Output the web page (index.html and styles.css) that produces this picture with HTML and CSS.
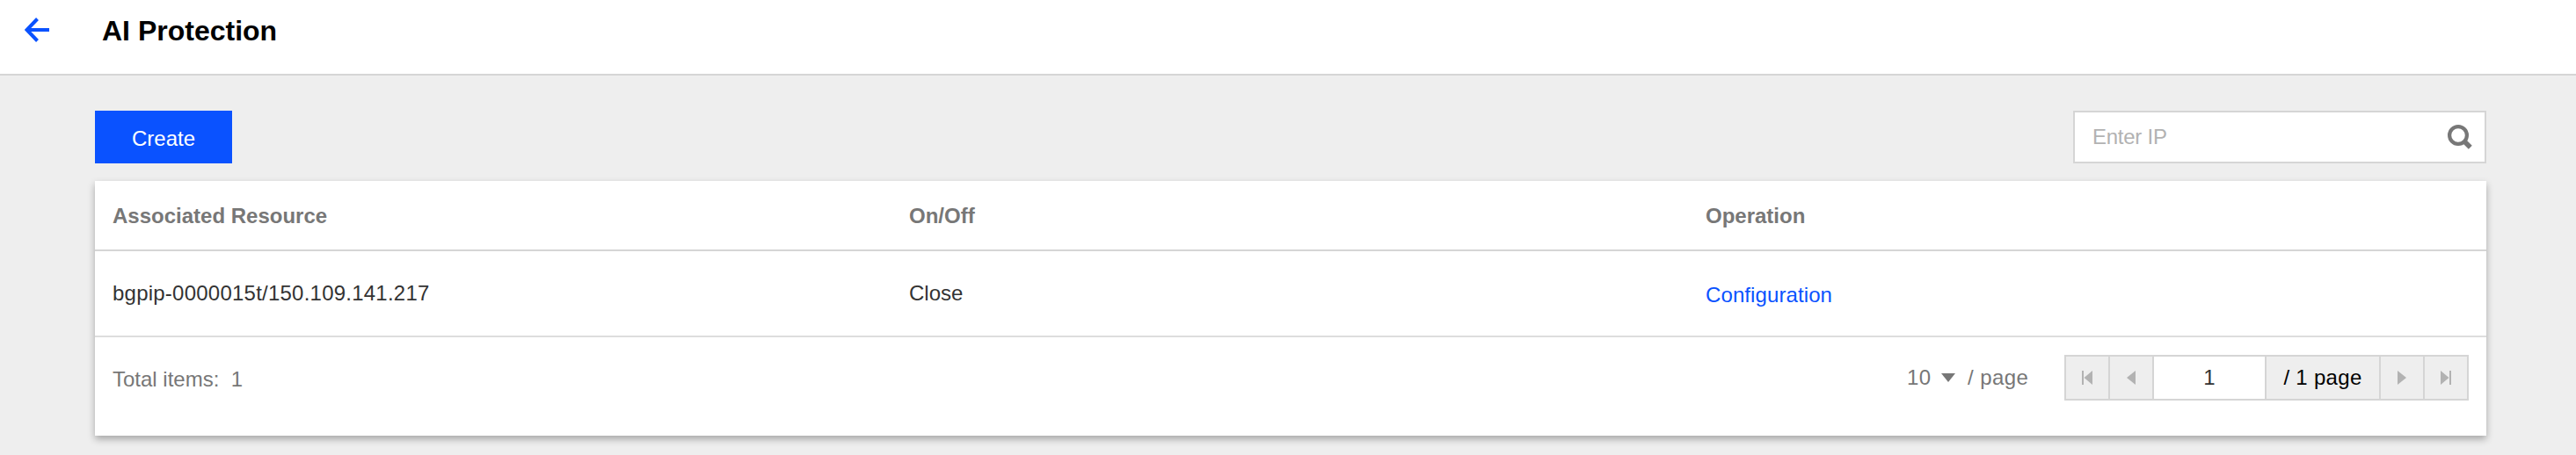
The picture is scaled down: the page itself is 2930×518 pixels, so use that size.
FILE: index.html
```html
<!DOCTYPE html>
<html lang="en">
<head>
<meta charset="utf-8">
<title>AI Protection</title>
<link rel="stylesheet" href="styles.css">
</head>
<body>
<header class="header">
  <a class="back" aria-label="Back"><svg width="28" height="28" viewBox="0 0 28 28"><path d="M28 14H4M14.5 1.5L2.5 14l12 12.5" fill="none" stroke="#0a52ff" stroke-width="4"/></svg></a>
  <h1 class="title">AI Protection</h1>
</header>
<main class="main">
  <div class="toolbar">
    <button class="create"><span>Create</span></button>
    <div class="search">
      <span class="placeholder">Enter IP</span>
      <svg width="28" height="28" viewBox="0 0 28 28" fill="none" stroke="#777"><circle cx="12" cy="12" r="9.9" stroke-width="4.2"/><path d="M18.5 18.5l7.3 7.3" stroke-width="5.6"/></svg>
    </div>
  </div>
  <section class="card">
    <div class="row head">
      <span class="cell">Associated Resource</span><span class="cell">On/Off</span><span class="cell">Operation</span>
    </div>
    <div class="row body">
      <span class="cell resource">bgpip-0000015t/150.109.141.217</span><span class="cell">Close</span><a class="cell link">Configuration</a>
    </div>
    <footer class="foot">
      <span class="total">Total items:&nbsp; 1</span>
      <div class="paging">
        <span class="size">10</span>
        <svg class="caret" width="16" height="10" viewBox="0 0 16 10"><path d="M0 0h16L8 10z" fill="#777"/></svg>
        <span class="per">/ page</span>
        <div class="pager">
          <span class="btn"><svg width="12" height="16" viewBox="0 0 12 16"><path d="M0 0h2v16H0zM12 0v16L2.5 8z" fill="#b2b2b2"/></svg></span>
          <span class="btn"><svg width="10" height="16" viewBox="0 0 10 16"><path d="M10 0v16L0 8z" fill="#b2b2b2"/></svg></span>
          <span class="current">1</span>
          <span class="pages">/ 1 page</span>
          <span class="btn"><svg width="10" height="16" viewBox="0 0 10 16"><path d="M0 0v16l10-8z" fill="#b2b2b2"/></svg></span>
          <span class="btn"><svg width="12" height="16" viewBox="0 0 12 16"><path d="M10 0h2v16h-2zM0 0v16l9.5-8z" fill="#b2b2b2"/></svg></span>
        </div>
      </div>
    </footer>
  </section>
</main>
</body>
</html>
```
FILE: styles.css
```css
* { box-sizing: border-box; }
body {
  margin: 0;
  height: 518px;
  overflow: hidden;
  background: #eee;
  color: #333;
  font: 24px/30px "Liberation Sans", Arial, sans-serif;
}
svg { display: block; flex: none; }
.header {
  display: flex;
  align-items: flex-start;
  height: 86px;
  padding-left: 28px;
  background: #fff;
  border-bottom: 2px solid #d5d5d5;
}
.back { width: 88px; padding-top: 20px; }
.title { margin: 0; font-size: 32px; line-height: 70px; color: #000; }
.main { padding: 40px 102px 0 108px; }
.toolbar { display: flex; justify-content: space-between; height: 60px; }
.create {
  width: 156px;
  height: 60px;
  padding: 3px 0 0;
  border: 0;
  background: #0a52ff;
  color: #fff;
  font: inherit;
}
.search {
  display: flex;
  align-items: center;
  justify-content: space-between;
  width: 470px;
  height: 60px;
  padding: 0 14px 0 20px;
  border: 2px solid #d5d5d5;
  background: #fff;
  color: #b2b2b2;
}
.placeholder { letter-spacing: -.25px; }
.card {
  margin-top: 20px;
  height: 290px;
  background: #fff;
  box-shadow: 0 4px 8px rgba(0, 0, 0, .3);
}
.row { display: grid; grid-template-columns: 906px 906px 1fr; align-items: center; }
.cell { padding-left: 20px; white-space: nowrap; }
.head {
  height: 80px;
  border-bottom: 2px solid #d5d5d5;
  padding-top: 2px;
  color: #777;
  font-weight: bold;
}
.body { height: 98px; border-bottom: 2px solid #ddd; }
.resource { letter-spacing: .23px; }
.link { color: #0a52ff; padding-top: 4px; letter-spacing: .1px; }
.foot { display: flex; justify-content: space-between; padding: 20px 20px 0; color: #777; }
.total { line-height: 56px; }
.paging { display: flex; align-items: center; height: 52px; }
.size { width: 39px; letter-spacing: .3px; }
.caret { margin-right: 14px; }
.per { width: 110px; letter-spacing: .4px; }
.pager { display: flex; width: 460px; height: 52px; border: 2px solid #d5d5d5; background: #eee; }
.pager > * { display: flex; align-items: center; justify-content: center; border-right: 2px solid #d5d5d5; }
.pager > :last-child { border-right: 0; width: 48px; }
.btn { width: 50px; }
.current { width: 128px; background: #fff; color: #333; }
.pages { width: 130px; color: #000; letter-spacing: .3px; }
```
